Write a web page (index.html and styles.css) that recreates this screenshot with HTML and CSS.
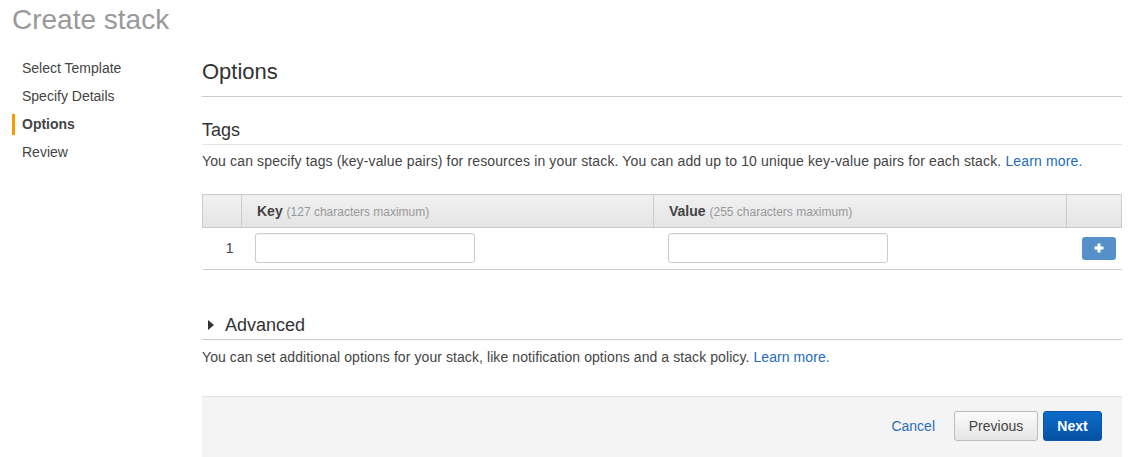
FILE: index.html
```html
<!DOCTYPE html>
<html>
<head>
<meta charset="utf-8">
<title>Create stack</title>
<link rel="stylesheet" href="styles.css">
</head>
<body>
<header class="page-header">
  <h1 class="page-title">Create stack</h1>
</header>
<div class="layout">
  <nav class="steps">
    <div class="step">Select Template</div>
    <div class="step">Specify Details</div>
    <div class="step active">Options</div>
    <div class="step">Review</div>
  </nav>
  <main class="content">
    <h2 class="section-title">Options</h2>
    <h3 class="sub-title">Tags</h3>
    <p class="desc">You can specify tags (key-value pairs) for resources in your stack. You can add up to 10 unique key-value pairs for each stack. <a class="link" href="#">Learn more.</a></p>
    <table class="tags">
      <colgroup>
        <col class="c-num">
        <col class="c-key">
        <col class="c-val">
        <col class="c-act">
      </colgroup>
      <thead>
        <tr>
          <th class="col-num"></th>
          <th class="col-key"><b>Key</b> <span class="hint">(127 characters maximum)</span></th>
          <th class="col-val"><b>Value</b> <span class="hint">(255 characters maximum)</span></th>
          <th class="col-act"></th>
        </tr>
      </thead>
      <tbody>
        <tr>
          <td class="num">1</td>
          <td class="cell"><input class="field" type="text"></td>
          <td class="cell cell-val"><input class="field" type="text"></td>
          <td class="act"><button class="add-btn" type="button"><svg width="10" height="10" viewBox="0 0 10 10"><path d="M3.5 0.5h3v3h3v3h-3v3h-3v-3h-3v-3h3z" fill="#fff"/></svg></button></td>
        </tr>
      </tbody>
    </table>
    <h3 class="advanced"><span class="caret"></span>Advanced</h3>
    <p class="desc adv-desc">You can set additional options for your stack, like notification options and a stack policy. <a class="link" href="#">Learn more.</a></p>
    <footer class="actions">
      <a class="cancel" href="#">Cancel</a>
      <button class="btn btn-prev" type="button">Previous</button>
      <button class="btn btn-next" type="button">Next</button>
    </footer>
  </main>
</div>
</body>
</html>
```
FILE: styles.css
```css
html, body {
  margin: 0;
  padding: 0;
  background: #fff;
  font-family: "Liberation Sans", Arial, sans-serif;
  color: #444;
  font-size: 14px;
  overflow: hidden;
}

.page-header {
  height: 44px;
  padding: 3px 0 0 12px;
  box-sizing: border-box;
}

.page-title {
  margin: 0;
  font-size: 28px;
  line-height: 34px;
  font-weight: normal;
  color: #999;
}

.layout {
  display: flex;
}

.steps {
  width: 202px;
  flex: none;
  padding: 14px 0 0 12px;
  box-sizing: border-box;
  display: flex;
  flex-direction: column;
  gap: 7px;
}

.step {
  line-height: 21px;
  padding-left: 10px;
  color: #444;
}

.step.active {
  border-left: 3px solid #ff9900;
  padding-left: 7px;
  font-weight: bold;
}

.content {
  width: 920px;
  display: flex;
  flex-direction: column;
}

.section-title {
  margin: 15px 0 0;
  font-size: 22px;
  line-height: 26px;
  font-weight: normal;
  color: #333;
  padding-bottom: 11px;
  border-bottom: 1px solid #ccc;
}

.sub-title {
  margin: 22px 0 0;
  font-size: 18px;
  line-height: 22px;
  font-weight: normal;
  color: #333;
  padding-bottom: 3px;
  border-bottom: 1px solid #e4e4e4;
}

.desc {
  margin: 6px 0 0;
  line-height: 20px;
  color: #444;
  letter-spacing: 0.14px;
}

.link {
  color: #1e6cc0;
  text-decoration: none;
}

.tags {
  margin-top: 23px;
  width: 919px;
  border-collapse: collapse;
  table-layout: fixed;
}

.c-num { width: 39px; }
.c-key { width: 412px; }
.c-val { width: 413px; }
.c-act { width: 55px; }

.tags th {
  height: 32px;
  padding: 0 0 0 15px;
  text-align: left;
  border: 1px solid #ccc;
  background: linear-gradient(#f1f1f1, #e4e4e4);
  font-size: 14px;
  color: #444;
}

.tags th.col-num,
.tags th.col-act { padding: 0; }

.hint {
  font-size: 12px;
  font-weight: normal;
  color: #999;
}

.tags td {
  padding: 5px 0 6px;
  border-bottom: 1px solid #ccc;
  height: 30px;
}

.tags td.num {
  text-align: right;
  padding-right: 8px;
  color: #444;
}

.tags td.cell {
  padding-left: 13px;
}

.tags td.cell-val {
  padding-left: 14px;
}

.field {
  display: block;
  width: 220px;
  height: 30px;
  box-sizing: border-box;
  border: 1px solid #ccc;
  border-radius: 3px;
  box-shadow: inset 0 1px 1px rgba(0,0,0,0.05);
  background: #fff;
  margin: 0;
}

.tags td.act {
  text-align: right;
  padding-right: 6px;
}

.add-btn {
  width: 34px;
  height: 23px;
  border: none;
  border-radius: 3px;
  background: #5590c9;
  padding: 0;
  display: inline-flex;
  align-items: center;
  justify-content: center;
  vertical-align: middle;
}

.advanced {
  margin: 44px 0 0;
  font-size: 18px;
  line-height: 22px;
  font-weight: normal;
  color: #333;
  padding: 0 0 3px 6px;
  border-bottom: 1px solid #ccc;
  display: flex;
  align-items: center;
}

.caret {
  width: 0;
  height: 0;
  border-top: 5px solid transparent;
  border-bottom: 5px solid transparent;
  border-left: 6px solid #333;
  margin-right: 11px;
}

.adv-desc {
  margin-top: 7px;
  letter-spacing: 0.08px;
}

.actions {
  margin-top: 29px;
  background: #f4f4f4;
  border-top: 1px solid #e2e2e2;
  padding: 14px 20px 16px 0;
  display: flex;
  justify-content: flex-end;
  align-items: center;
}

.cancel {
  color: #2a6ebb;
  text-decoration: none;
  margin-right: 19px;
  font-size: 14px;
}

.btn {
  height: 30px;
  border-radius: 3px;
  font-family: "Liberation Sans", Arial, sans-serif;
  font-size: 14px;
  padding: 0;
}

.btn-prev {
  width: 84px;
  border: 1px solid #bdbdbd;
  background: linear-gradient(#fbfbfb, #e5e5e5);
  color: #444;
  margin-right: 5px;
}

.btn-next {
  width: 59px;
  border: 1px solid #0a56a8;
  background: linear-gradient(#0d6bcb, #0652a3);
  color: #fff;
  font-weight: bold;
}
```
